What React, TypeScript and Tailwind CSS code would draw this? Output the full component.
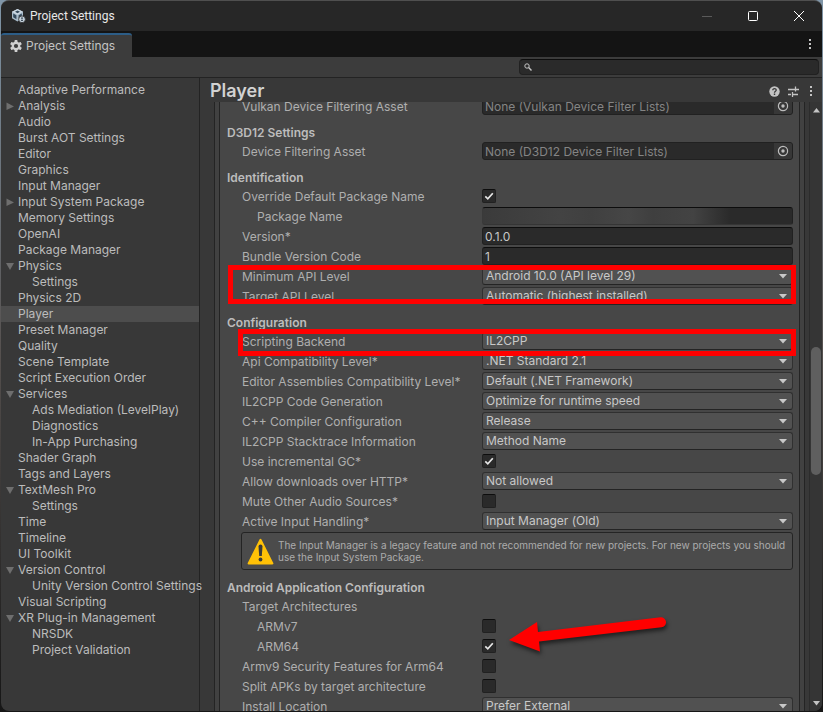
import { useId, useState, type ReactNode } from "react";

type TreeItem = { name: string; child?: boolean; fold?: "open" | "closed" };

const tree: TreeItem[] = [
  { name: "Adaptive Performance" },
  { name: "Analysis", fold: "closed" },
  { name: "Audio" },
  { name: "Burst AOT Settings" },
  { name: "Editor" },
  { name: "Graphics" },
  { name: "Input Manager" },
  { name: "Input System Package", fold: "closed" },
  { name: "Memory Settings" },
  { name: "OpenAI" },
  { name: "Package Manager" },
  { name: "Physics", fold: "open" },
  { name: "Settings", child: true },
  { name: "Physics 2D" },
  { name: "Player" },
  { name: "Preset Manager" },
  { name: "Quality" },
  { name: "Scene Template" },
  { name: "Script Execution Order" },
  { name: "Services", fold: "open" },
  { name: "Ads Mediation (LevelPlay)", child: true },
  { name: "Diagnostics", child: true },
  { name: "In-App Purchasing", child: true },
  { name: "Shader Graph" },
  { name: "Tags and Layers" },
  { name: "TextMesh Pro", fold: "open" },
  { name: "Settings", child: true },
  { name: "Time" },
  { name: "Timeline" },
  { name: "UI Toolkit" },
  { name: "Version Control", fold: "open" },
  { name: "Unity Version Control Settings", child: true },
  { name: "Visual Scripting" },
  { name: "XR Plug-in Management", fold: "open" },
  { name: "NRSDK", child: true },
  { name: "Project Validation", child: true },
];

function Kebab() {
  return (
    <svg width="4" height="12" viewBox="0 0 4 12" fill="#c4c4c4">
      <path d="M1 1h2v2H1zM1 5h2v2H1zM1 9h2v2H1z" />
    </svg>
  );
}

function UnityIcon() {
  return (
    <svg width="16" height="16" viewBox="0 0 16 16">
      <path d="M7.500 1 13 3.800v6L7.500 13.500 2 10.200V3.800z" fill="#a9bccb" />
      <path d="M7.500 1 13 3.800 7.500 6.800 2 3.800z" fill="#cbd8e2" />
      <path d="M5 3.800 7.500 2.600 10 3.800 7.500 5.200zM3.200 5.600 6.400 7.300v3.900L3.200 9.300zM8.600 7.300l3.200-1.700v2L8.600 10z" fill="#34495b" />
      <circle cx="12" cy="11.300" r="3.400" fill="#c3d0da" stroke="#272727" strokeWidth="0.800" />
      <path d="M11.100 9.600h1.800v1.200h-1.800zM11.100 11.800h1.800V13h-1.800z" fill="#33414d" />
    </svg>
  );
}

function GearIcon() {
  return (
    <svg width="12" height="12" viewBox="0 0 12 12">
      <g fill="#d0d0d0">
        <rect x="4.600" y="0" width="2.800" height="12" rx="0.500" />
        <rect x="4.600" y="0" width="2.800" height="12" rx="0.500" transform="rotate(60 6 6)" />
        <rect x="4.600" y="0" width="2.800" height="12" rx="0.500" transform="rotate(120 6 6)" />
        <circle cx="6" cy="6" r="4.400" />
      </g>
      <circle cx="6" cy="6" r="2.100" fill="#3c3c3c" />
    </svg>
  );
}

function Row({ label, id, nested, children }: { label: string; id?: string; nested?: boolean; children?: ReactNode }) {
  return (
    <div className="flex h-5 items-center">
      <label
        htmlFor={id}
        className={`w-[262px] shrink-0 pt-0.5 leading-4 whitespace-nowrap text-[#afafaf] ${nested ? "pl-[37px]" : "pl-[22px]"}`}
      >
        {label}
      </label>
      {children}
    </div>
  );
}

function Heading({ children }: { children: ReactNode }) {
  return <h2 className="h-[25px] pt-2 pl-[7px] leading-4.5 font-semibold text-[#bcbcbc]">{children}</h2>;
}

function SelectRow({ label, value }: { label: string; value: string }) {
  const id = useId();
  return (
    <Row label={label} id={id}>
      <div className="relative h-[18px] flex-1">
        <select
          id={id}
          className="block h-full w-full appearance-none rounded-[3px] border border-[#303030] border-b-[#242424] bg-[#515151] pl-[3px] leading-4 text-[#c8c8c8] outline-none"
        >
          <option>{value}</option>
        </select>
        <svg className="pointer-events-none absolute top-[7px] right-1.5" width="8" height="5" viewBox="0 0 8 5">
          <path d="M0 0h8L4 4.600z" fill="#c8c8c8" />
        </svg>
      </div>
    </Row>
  );
}

function TextRow({ label, value, nested, masked }: { label: string; value: string; nested?: boolean; masked?: boolean }) {
  const id = useId();
  return (
    <Row label={label} id={id} nested={nested}>
      <input
        id={id}
        type="text"
        defaultValue={value}
        className={`h-[18px] min-w-0 flex-1 rounded-[3px] border border-[#212121] border-t-[#0d0d0d] px-0.5 leading-4 text-[#c8c8c8] outline-none ${
          masked
            ? "border-l-[#3a3a3a] border-b-[#353535] bg-[linear-gradient(90deg,#3b3b3b_0%,#434343_25%,#404040_35%,#464646_47%,#3f3f3f_55%,#434343_68%,#2a2a2a_80%)]"
            : "bg-[#2a2a2a]"
        }`}
      />
    </Row>
  );
}

function ObjectRow({ label, value }: { label: string; value: string }) {
  const id = useId();
  return (
    <Row label={label} id={id}>
      <div className="flex h-[18px] flex-1 overflow-hidden rounded-[3px] border border-[#212121] bg-[#2a2a2a]">
        <input id={id} type="text" readOnly value={value} className="min-w-0 flex-1 px-0.5 pt-px leading-4 text-[#848484] outline-none" />
        <button aria-label="Select object" className="flex w-[18px] items-center justify-center bg-[#373737]">
          <svg width="12" height="12" viewBox="0 0 12 12">
            <circle cx="6" cy="6" r="4.600" fill="none" stroke="#bdbdbd" strokeWidth="1.200" />
            <circle cx="6" cy="6" r="1.700" fill="#bdbdbd" />
          </svg>
        </button>
      </div>
    </Row>
  );
}

function CheckRow({ label, on = false, nested }: { label: string; on?: boolean; nested?: boolean }) {
  const id = useId();
  const [checked, setChecked] = useState(on);
  return (
    <Row label={label} id={id} nested={nested}>
      <div className="relative size-3.5">
        <input
          id={id}
          type="checkbox"
          checked={checked}
          onChange={(e) => setChecked(e.target.checked)}
          className="block size-3.5 appearance-none rounded-[2px] border border-[#212121] border-t-[#0d0d0d] bg-[#2a2a2a]"
        />
        {checked && (
          <svg className="pointer-events-none absolute inset-0" width="14" height="14" viewBox="0 0 14 14">
            <path d="M3.300 7.400 5.800 9.800 10.800 4.200" fill="none" stroke="#e6e6e6" strokeWidth="1.700" />
          </svg>
        )}
      </div>
    </Row>
  );
}

function TitleBar() {
  return (
    <header className="flex h-[30px] shrink-0 items-center bg-[#272727] pl-[9px]">
      <UnityIcon />
      <span className="ml-1 font-[Roboto,sans-serif] text-xs text-[#e8e8e8]">Project Settings</span>
      <div className="ml-auto flex h-full">
        <button aria-label="Minimize" className="flex w-[46px] items-center justify-center">
          <svg width="10" height="10" viewBox="0 0 10 10" stroke="#5a5a5a">
            <path d="M0 5.500h10" />
          </svg>
        </button>
        <button aria-label="Maximize" className="flex w-[46px] items-center justify-center">
          <svg width="10" height="10" viewBox="0 0 10 10" fill="none" stroke="#fff">
            <rect x="0.500" y="0.500" width="9" height="9" rx="1" />
          </svg>
        </button>
        <button aria-label="Close" className="flex w-[46px] items-center justify-center">
          <svg width="10" height="10" viewBox="0 0 10 10" fill="none" stroke="#fff">
            <path d="M0 0l10 10M10 0 0 10" />
          </svg>
        </button>
      </div>
    </header>
  );
}

function Sidebar() {
  const [selected, setSelected] = useState(14);
  return (
    <nav className="w-[199px] shrink-0 border-r border-[#232323] pt-1">
      {tree.map((item, i) => (
        <button
          key={i}
          onClick={() => setSelected(i)}
          className={`relative flex h-4 w-full items-center text-left leading-4 whitespace-nowrap text-[#bcbcbc] ${
            item.child ? "pl-[31px]" : "pl-[17px]"
          } ${selected === i ? "bg-[#4d4d4d]" : ""}`}
        >
          {item.fold && (
            <svg className="absolute top-1 left-[5px]" width="8" height="8" viewBox="0 0 8 8" fill="#6e6e6e">
              <path d={item.fold === "open" ? "M0 1h8L4 8z" : "M0.500 0.500 8 4.500 0.500 8z"} />
            </svg>
          )}
          {item.name}
        </button>
      ))}
    </nav>
  );
}

function Scrollbar() {
  return (
    <div className="flex w-[13px] shrink-0 flex-col items-center border-l border-[#2c2c2c] bg-[#353535]">
      <button aria-label="Scroll up" className="flex h-4 w-full items-center justify-center">
        <svg width="7" height="5" viewBox="0 0 7 5" fill="#c4c4c4">
          <path d="M3.500 0 7 4.500H0z" />
        </svg>
      </button>
      <div className="flex-[229]" />
      <div className="h-32 w-2.5 rounded-full bg-[#5f5f5f]" />
      <div className="flex-[220]" />
      <button aria-label="Scroll down" className="flex h-4 w-full items-center justify-center">
        <svg width="7" height="5" viewBox="0 0 7 5" fill="#c4c4c4">
          <path d="M0 0h7L3.500 4.500z" />
        </svg>
      </button>
    </div>
  );
}

function HelpBox() {
  return (
    <div className="my-px ml-[21px] flex h-[38px] items-center rounded-[3px] border border-[#242424] bg-[#4b4b4b] pl-[5px]">
      <svg className="shrink-0" width="27" height="27" viewBox="0 0 27 27">
        <path d="M13.500 1.800 25.400 25.400H1.600z" fill="#ffc107" stroke="#ffc107" strokeWidth="2" strokeLinejoin="round" />
        <path d="M11.500 8.500a2 2 0 0 1 4 0l-.7 9.500h-2.600z" fill="#3a3a3a" />
        <circle cx="13.500" cy="21.500" r="1.900" fill="#3a3a3a" />
      </svg>
      <p className="ml-1 text-[10px] leading-3 text-[#ababab]">
        The Input Manager is a legacy feature and not recommended for new projects. For new projects you should use the
        Input System Package.
      </p>
    </div>
  );
}

function PlayerSettings() {
  return (
    <div className="-mt-1.5 flex-1 border-x border-[#242424] bg-[#414141] px-1">
      <div className="border-x border-[#242424] bg-[#474747] pr-1.5">
        <ObjectRow label="Vulkan Device Filtering Asset" value="None (Vulkan Device Filter Lists)" />

        <Heading>D3D12 Settings</Heading>
        <ObjectRow label="Device Filtering Asset" value="None (D3D12 Device Filter Lists)" />

        <Heading>Identification</Heading>
        <CheckRow label="Override Default Package Name" on />
        <TextRow label="Package Name" value="" nested masked />
        <TextRow label="Version*" value="0.1.0" />
        <TextRow label="Bundle Version Code" value="1" />
        <div className="relative">
          <SelectRow label="Minimum API Level" value="Android 10.0 (API level 29)" />
          <SelectRow label="Target API Level" value="Automatic (highest installed)" />
          <div className="pointer-events-none absolute -top-px -right-[3px] bottom-0.5 left-2 border-5 border-[#ff0000]" />
        </div>

        <Heading>Configuration</Heading>
        <div className="relative z-10">
          <SelectRow label="Scripting Backend" value="IL2CPP" />
          <div className="pointer-events-none absolute -top-0.5 -right-[3px] -bottom-[5px] left-[18px] border-5 border-[#ff0000]" />
        </div>
        <SelectRow label="Api Compatibility Level*" value=".NET Standard 2.1" />
        <SelectRow label="Editor Assemblies Compatibility Level*" value="Default (.NET Framework)" />
        <SelectRow label="IL2CPP Code Generation" value="Optimize for runtime speed" />
        <SelectRow label="C++ Compiler Configuration" value="Release" />
        <SelectRow label="IL2CPP Stacktrace Information" value="Method Name" />
        <CheckRow label="Use incremental GC*" on />
        <SelectRow label="Allow downloads over HTTP*" value="Not allowed" />
        <CheckRow label="Mute Other Audio Sources*" />
        <SelectRow label="Active Input Handling*" value="Input Manager (Old)" />
        <HelpBox />

        <Heading>Android Application Configuration</Heading>
        <Row label="Target Architectures" />
        <div className="relative">
          <CheckRow label="ARMv7" nested />
          <CheckRow label="ARM64" nested on />
          <svg
            className="pointer-events-none absolute -top-1 left-[286px] drop-shadow-[1px_3px_2px_rgba(0,0,0,0.55)]"
            width="164"
            height="44"
            viewBox="0 0 164 44"
            fill="#ff0000"
          >
            <path d="M3 28 31 10l1 10L154.500 5.300a5 5 0 0 1 1 10L33 29.500l1 10z" />
          </svg>
        </div>
        <CheckRow label="Armv9 Security Features for Arm64" />
        <CheckRow label="Split APKs by target architecture" />
        <SelectRow label="Install Location" value="Prefer External" />
      </div>
    </div>
  );
}

export default function App() {
  return (
    <div className="h-screen bg-linear-to-b from-[#8096a8] via-[#55504e] to-[#161616] px-px pb-px">
      <div className="flex h-full flex-col overflow-hidden rounded-lg border-t border-[#4f4f4f] bg-[#383838] font-[Inter,sans-serif] text-xs">
        <TitleBar />

        <div className="flex h-[26px] shrink-0 items-end bg-[#141414] pr-2.5">
          <div className="flex h-6 items-center gap-1 rounded-t-[3px] border-t-2 border-[#2c5d87] bg-[#3c3c3c] px-[9px] pr-4 text-[#c4c4c4]">
            <GearIcon />
            <span className="pr-px">Project Settings</span>
          </div>
          <button aria-label="Tab menu" className="mb-[7px] ml-auto">
            <Kebab />
          </button>
        </div>

        <div className="flex h-[21px] shrink-0 items-start border-b border-[#232323] bg-[#3c3c3c] pt-0.5 pr-[3px]">
          <div className="ml-auto flex h-4 w-[300px] items-center rounded-[4px] border border-[#212121] border-t-[#0d0d0d] bg-[#2a2a2a] pl-1">
            <svg width="8" height="8" viewBox="0 0 8 8" fill="none" stroke="#c4c4c4">
              <circle cx="3" cy="3" r="2.200" />
              <path d="M4.600 4.600 7.500 7.500" strokeWidth="1.400" />
            </svg>
            <input type="text" aria-label="Search" className="h-full min-w-0 flex-1 px-1 text-[#c8c8c8] outline-none" />
          </div>
        </div>

        <div className="flex min-h-0 flex-1">
          <Sidebar />
          <main className="flex min-w-0 flex-1 flex-col">
            <div className="flex h-6 shrink-0 items-center pr-[9px] pl-2.5">
              <h1 className="pt-0.5 text-[18px] leading-6 font-semibold text-[#d2d2d2]">Player</h1>
              <div className="mt-0.5 ml-auto flex items-center gap-2">
                <button aria-label="Help">
                  <svg width="11" height="11" viewBox="0 0 11 11">
                    <circle cx="5.500" cy="5.500" r="5.200" fill="#c4c4c4" />
                    <path d="M3.800 4.300C3.800 2 7.300 2.200 7.200 4.200 7.100 5.300 5.500 5.300 5.500 6.700" fill="none" stroke="#383838" strokeWidth="1.300" />
                    <path d="M4.800 7.500h1.400v1.400H4.800z" fill="#383838" />
                  </svg>
                </button>
                <button aria-label="Presets">
                  <svg width="11" height="11" viewBox="0 0 11 11" stroke="#c4c4c4" strokeWidth="1.300">
                    <path d="M0 3.500h7M7.500 0.500v5M7.500 3.500H11M0 8.500h3M4.500 6v5M4.500 8.500H10" />
                  </svg>
                </button>
                <button aria-label="More" className="ml-0.5">
                  <Kebab />
                </button>
              </div>
            </div>
            <div className="flex min-h-0 flex-1 overflow-hidden pl-3.5">
              <PlayerSettings />
              <div className="w-1 shrink-0" />
              <Scrollbar />
            </div>
          </main>
        </div>
      </div>
    </div>
  );
}
